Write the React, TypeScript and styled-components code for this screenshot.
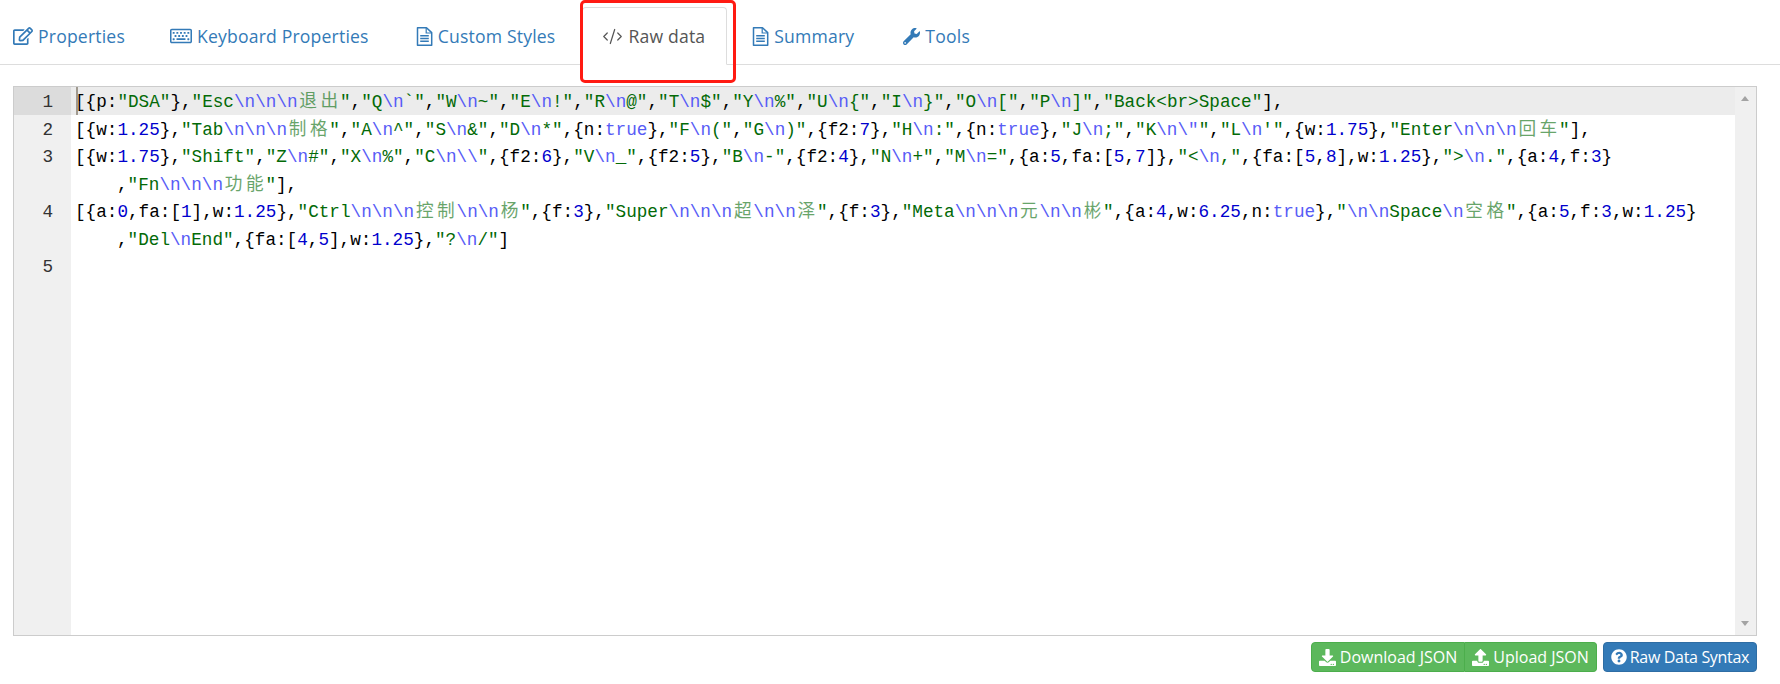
import React from 'react';
import styled, { createGlobalStyle } from 'styled-components';
import { FaRegEdit, FaRegKeyboard, FaWrench, FaDownload, FaUpload, FaQuestionCircle } from 'react-icons/fa';
import { CodeXml } from 'lucide-react';

const GlobalStyle = createGlobalStyle`
    html, body {
        margin: 0;
        padding: 0;
        background: #fff;
        font-family: 'Open Sans', 'Liberation Sans', sans-serif;
    }
`;

const Page = styled.div`
    position: relative;
    width: 1780px;
    height: 684px;
    overflow: hidden;
`;

const TabBar = styled.div`
    display: flex;
    height: 65px;
    box-sizing: border-box;
    padding-top: 7px;
    border-bottom: 1px solid #ddd;
`;

const Tab = styled.div<{ $active?: boolean }>`
    display: flex;
    align-items: center;
    gap: 5px;
    height: 58px;
    box-sizing: border-box;
    padding: 0 21px 0 19px;
    margin-right: 5px;
    font-size: 17.6px;
    letter-spacing: 0.18px;
    color: ${(p) => (p.$active ? '#555' : '#337ab7')};
    border: 1px solid ${(p) => (p.$active ? '#ddd' : 'transparent')};
    border-bottom-color: ${(p) => (p.$active ? '#fff' : 'transparent')};
    border-radius: 4px 4px 0 0;
    background: ${(p) => (p.$active ? '#fff' : 'transparent')};

    &:first-child {
        padding: 0 19px 0 12px;
    }

    &:last-child {
        margin-left: 2px;
    }
`;

const Highlight = styled.div`
    position: absolute;
    left: 580px;
    top: 0;
    width: 156px;
    height: 83px;
    box-sizing: border-box;
    border: 3px solid #ff1a12;
    border-radius: 5px;
`;

const Editor = styled.div`
    display: flex;
    height: 550px;
    box-sizing: border-box;
    margin: 21px 23px 0 13px;
    border: 1px solid #ccc;
    overflow: hidden;
`;

const Gutter = styled.div`
    width: 57px;
    flex: none;
    background: #f0f0f0;
`;

const GutterCell = styled.div<{ $active?: boolean; $rows?: number }>`
    height: ${(p) => (p.$rows || 1) * 27.5}px;
    box-sizing: border-box;
    padding: 3px 18px 0 0;
    text-align: right;
    font: 17.66px/24.5px 'Liberation Mono', monospace;
    color: #333;
    background: ${(p) => (p.$active ? '#dcdcdc' : 'transparent')};
`;

const Code = styled.div`
    flex: 1;
    min-width: 0;
    font-family: 'Liberation Mono', 'Noto Sans CJK SC', monospace;
    font-size: 17.66px;
    line-height: 24.5px;
    color: #000;
`;

const Line = styled.div<{ $active?: boolean }>`
    position: relative;
    min-height: 27.5px;
    box-sizing: border-box;
    padding: 3px 0 0 4px;
    white-space: pre;
    background: ${(p) => (p.$active ? '#ececec' : 'transparent')};
`;

const Wrapped = styled.div`
    padding: 3px 0 0 42px;
`;

const Caret = styled.span`
    position: absolute;
    left: 5px;
    top: 0;
    width: 2px;
    height: 100%;
    background: #a09a90;
`;

const Str = styled.span`color: #036a07;`;
const Esc = styled.span`color: #585cf6;`;
const Num = styled.span`color: #0000cd;`;
const Han = styled.span`
    display: inline-block;
    width: 21.2px;
    text-align: center;
    color: #036a07;
    opacity: 0.6;
`;

const Scrollbar = styled.div`
    position: relative;
    width: 21px;
    flex: none;
    background: #f0f0f0;
`;

const Arrow = styled.div<{ $down?: boolean }>`
    position: absolute;
    left: 6px;
    ${(p) => (p.$down ? 'bottom: 9px;' : 'top: 9px;')}
    width: 0;
    height: 0;
    border-left: 4.5px solid transparent;
    border-right: 4.5px solid transparent;
    ${(p) => (p.$down ? 'border-top' : 'border-bottom')}: 5px solid #a3a3a3;
`;

const Footer = styled.div`
    display: flex;
    justify-content: flex-end;
    gap: 6px;
    margin: 6px 23px 0 0;
`;

const ButtonGroup = styled.div`
    display: flex;
`;

const Button = styled.div<{ $pos?: 'left' | 'right' }>`
    display: flex;
    align-items: center;
    gap: 4px;
    height: 30px;
    box-sizing: border-box;
    padding: 0 7px;
    font-size: 16px;
    color: #fff;
    background: #5cb85c;
    border: 1px solid #4cae4c;
    border-width: ${(p) => (p.$pos === 'right' ? '1px 1px 1px 0' : '1px')};
    border-radius: ${(p) => (p.$pos === 'left' ? '4px 0 0 4px' : '0 4px 4px 0')};
`;

const BlueButton = styled(Button)`
    gap: 3px;
    letter-spacing: -0.33px;
    background: #337ab7;
    border: 1px solid #2e6da4;
    border-radius: 4px;
`;

const FileIcon = () => (
    <svg width="17" height="19" viewBox="0 0 17 19" fill="none" stroke="currentColor" style={{ flex: 'none' }}>
        <path d="M1.5 .8H10.5L15.7 5.6V18.2H1.5Z" strokeWidth="1.5" strokeLinejoin="round" />
        <path d="M10.2 1V6H15.5" strokeWidth="1.2" />
        <path d="M4.2 8.7H12.8M4.2 11.5H12.8M4.2 14.3H12.8" strokeWidth="1.4" />
    </svg>
);

// splits a source line into coloured tokens
const tokenize = (src: string) => {
    const out: React.ReactNode[] = [];
    const re = /("(?:[^"\\]|\\.)*")|(\b\d+(?:\.\d+)?\b)|(\btrue\b)/g;
    let last = 0;
    let m: RegExpExecArray | null;
    let key = 0;
    while ((m = re.exec(src))) {
        out.push(src.slice(last, m.index));
        if (m[1]) {
            const parts = m[1].split(/(\\.|[\u4e00-\u9fff])/);
            out.push(
                <Str key={key++}>
                    {parts.map((t, i) =>
                        t.startsWith('\\') ? <Esc key={i}>{t}</Esc> : /[\u4e00-\u9fff]/.test(t) ? <Han key={i}>{t}</Han> : t
                    )}
                </Str>
            );
        } else if (m[2]) {
            out.push(<Num key={key++}>{m[2]}</Num>);
        } else {
            out.push(<Esc key={key++}>{m[3]}</Esc>);
        }
        last = m.index + m[0].length;
    }
    out.push(src.slice(last));
    return out;
};

const line1 = String.raw`[{p:"DSA"},"Esc\n\n\n退出","Q\n` + '`' + String.raw`","W\n~","E\n!","R\n@","T\n$","Y\n%","U\n{","I\n}","O\n[","P\n]","Back<br>Space"],`;
const line2 = String.raw`[{w:1.25},"Tab\n\n\n制格","A\n^","S\n&","D\n*",{n:true},"F\n(","G\n)",{f2:7},"H\n:",{n:true},"J\n;","K\n\"","L\n'",{w:1.75},"Enter\n\n\n回车"],`;
const line3a = String.raw`[{w:1.75},"Shift","Z\n#","X\n%","C\n\\",{f2:6},"V\n_",{f2:5},"B\n-",{f2:4},"N\n+","M\n=",{a:5,fa:[5,7]},"<\n,",{fa:[5,8],w:1.25},">\n.",{a:4,f:3}`;
const line3b = String.raw`,"Fn\n\n\n功能"],`;
const line4a = String.raw`[{a:0,fa:[1],w:1.25},"Ctrl\n\n\n控制\n\n杨",{f:3},"Super\n\n\n超\n\n泽",{f:3},"Meta\n\n\n元\n\n彬",{a:4,w:6.25,n:true},"\n\nSpace\n空格",{a:5,f:3,w:1.25}`;
const line4b = String.raw`,"Del\nEnd",{fa:[4,5],w:1.25},"?\n/"]`;

export default function App() {
    return (
        <Page>
            <GlobalStyle />
            <TabBar>
                <Tab><FaRegEdit size={20} />Properties</Tab>
                <Tab><FaRegKeyboard size={22} />Keyboard Properties</Tab>
                <Tab><FileIcon />Custom Styles</Tab>
                <Tab $active><CodeXml size={21} strokeWidth={1.4} />Raw data</Tab>
                <Tab><FileIcon />Summary</Tab>
                <Tab><FaWrench size={17} />Tools</Tab>
            </TabBar>
            <Highlight />
            <Editor>
                <Gutter>
                    <GutterCell $active>1</GutterCell>
                    <GutterCell>2</GutterCell>
                    <GutterCell $rows={2}>3</GutterCell>
                    <GutterCell $rows={2}>4</GutterCell>
                    <GutterCell>5</GutterCell>
                </Gutter>
                <Code>
                    <Line $active><Caret />{tokenize(line1)}</Line>
                    <Line>{tokenize(line2)}</Line>
                    <Line>{tokenize(line3a)}<Wrapped>{tokenize(line3b)}</Wrapped></Line>
                    <Line>{tokenize(line4a)}<Wrapped>{tokenize(line4b)}</Wrapped></Line>
                    <Line />
                </Code>
                <Scrollbar>
                    <Arrow />
                    <Arrow $down />
                </Scrollbar>
            </Editor>
            <Footer>
                <ButtonGroup>
                    <Button $pos="left"><FaDownload size={17} />Download JSON</Button>
                    <Button $pos="right"><FaUpload size={17} />Upload JSON</Button>
                </ButtonGroup>
                <BlueButton><FaQuestionCircle size={16} />Raw Data Syntax</BlueButton>
            </Footer>
        </Page>
    );
}
